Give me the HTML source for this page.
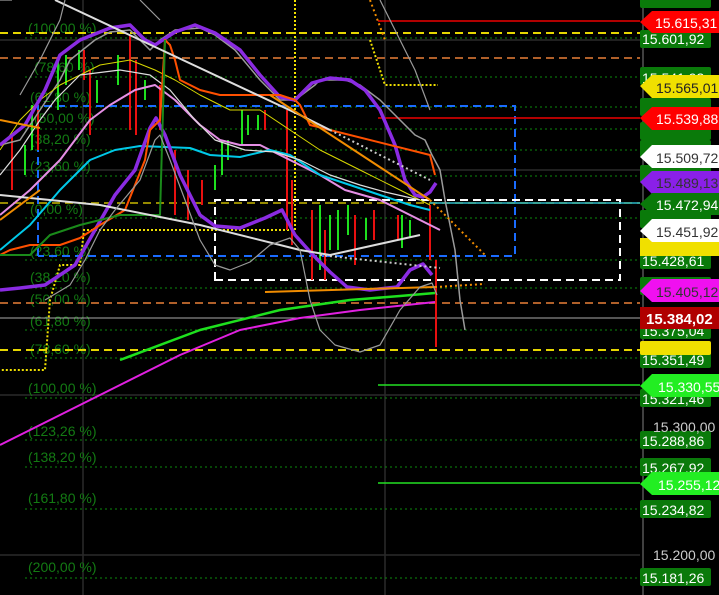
<!DOCTYPE html>
<html><head><meta charset="utf-8"><style>
html,body{margin:0;padding:0;background:#000;width:719px;height:595px;overflow:hidden}
svg{display:block}
.f{font-family:"Liberation Sans",sans-serif;font-size:14px;fill:#137a13}
.t{font-family:"Liberation Sans",sans-serif;font-size:14px}
</style></head><body>
<svg width="719" height="595" viewBox="0 0 719 595" xmlns="http://www.w3.org/2000/svg">
<rect width="719" height="595" fill="#000"/>
<g stroke="#2a2a2a" stroke-width="1.5">
<line x1="83" y1="0" x2="83" y2="595"/><line x1="385" y1="0" x2="385" y2="595"/>
<line x1="0" y1="40" x2="640" y2="40"/><line x1="0" y1="170" x2="640" y2="170"/>
<line x1="0" y1="395" x2="640" y2="395"/><line x1="0" y1="555" x2="640" y2="555"/>
</g>
<line x1="643" y1="0" x2="643" y2="595" stroke="#555" stroke-width="1.5"/>
<g stroke="#0c8a0c" stroke-width="1" stroke-dasharray="2,3">
<line x1="25" y1="38" x2="640" y2="38"/><line x1="25" y1="77" x2="640" y2="77"/>
<line x1="25" y1="107" x2="640" y2="107"/><line x1="25" y1="129" x2="640" y2="129"/>
<line x1="25" y1="150" x2="640" y2="150"/><line x1="25" y1="176" x2="640" y2="176"/>
<line x1="25" y1="218" x2="640" y2="218"/><line x1="25" y1="260" x2="640" y2="260"/>
<line x1="25" y1="288" x2="640" y2="288"/><line x1="25" y1="330" x2="640" y2="330"/>
<line x1="25" y1="358" x2="640" y2="358"/><line x1="25" y1="398" x2="640" y2="398"/>
<line x1="25" y1="440" x2="640" y2="440"/><line x1="25" y1="467" x2="640" y2="467"/>
<line x1="25" y1="509" x2="640" y2="509"/><line x1="25" y1="578" x2="640" y2="578"/>
</g>
<g class="f">
<text x="28" y="33">(100,00 %)</text><text x="34" y="72">(78,60 %)</text>
<text x="30" y="102">(61,80 %)</text><text x="34" y="123">(50,00 %)</text>
<text x="30" y="144">(38,20 %)</text><text x="30" y="171">(23,60 %)</text>
<text x="30" y="214">(0,00 %)</text><text x="30" y="256">(23,60 %)</text>
<text x="30" y="282">(38,20 %)</text><text x="30" y="304">(50,00 %)</text>
<text x="30" y="326">(61,80 %)</text><text x="30" y="354">(78,60 %)</text>
<text x="28" y="393">(100,00 %)</text><text x="28" y="436">(123,26 %)</text>
<text x="28" y="462">(138,20 %)</text><text x="28" y="503">(161,80 %)</text>
<text x="28" y="572">(200,00 %)</text>
</g>
<g stroke-width="2" stroke-dasharray="8,5" fill="none">
<line x1="0" y1="33" x2="640" y2="33" stroke="#e6d600"/>
<line x1="0" y1="58" x2="640" y2="58" stroke="#b0602a"/>
<line x1="0" y1="203" x2="640" y2="203" stroke="#c8b800" stroke-width="1.5"/>
<line x1="0" y1="303" x2="640" y2="303" stroke="#b0602a"/>
<line x1="0" y1="350" x2="640" y2="350" stroke="#e6d600"/>
<path d="M38 256 V106 H515 V256 H38" stroke="#1a6cff"/>
<path d="M215 280 V200 H620 V280 Z" stroke="#fff"/>
</g>
<g stroke-width="1.5">
<line x1="378" y1="21" x2="640" y2="21" stroke="#e00"/>
<line x1="378" y1="118" x2="640" y2="118" stroke="#e00"/>
<line x1="378" y1="385" x2="640" y2="385" stroke="#22e022"/>
<line x1="378" y1="483" x2="640" y2="483" stroke="#22e022"/>
<line x1="0" y1="318" x2="640" y2="318" stroke="#aaa" stroke-width="1"/>
<line x1="430" y1="203" x2="640" y2="203" stroke="#2ab8c8"/>
</g>
<g stroke="#f0e000" stroke-width="2" stroke-dasharray="2,2" fill="none">
<path d="M295 0 V230 H84 L80 265 H60 L50 300 L45 370 H0"/>
<path d="M370 40 L385 85 H438"/>
</g>
<g stroke-width="2">
<g stroke="#1ee01e">
<line x1="25" y1="145" x2="25" y2="175"/><line x1="32" y1="105" x2="32" y2="150"/><line x1="58" y1="60" x2="58" y2="110"/><line x1="66" y1="55" x2="66" y2="85"/><line x1="79" y1="50" x2="79" y2="70"/><line x1="97" y1="80" x2="97" y2="103"/><line x1="118" y1="55" x2="118" y2="85"/><line x1="145" y1="80" x2="145" y2="100"/><line x1="215" y1="165" x2="215" y2="190"/><line x1="222" y1="140" x2="222" y2="175"/><line x1="228" y1="140" x2="228" y2="160"/><line x1="242" y1="110" x2="242" y2="145"/><line x1="248" y1="115" x2="248" y2="135"/><line x1="258" y1="115" x2="258" y2="130"/><line x1="320" y1="205" x2="320" y2="270"/><line x1="330" y1="215" x2="330" y2="250"/><line x1="338" y1="210" x2="338" y2="250"/><line x1="348" y1="205" x2="348" y2="235"/><line x1="366" y1="218" x2="366" y2="240"/><line x1="402" y1="215" x2="402" y2="248"/><line x1="410" y1="220" x2="410" y2="238"/>
</g>
<g stroke="#e81010">
<line x1="12" y1="135" x2="12" y2="190"/><line x1="38" y1="110" x2="38" y2="150"/><line x1="84" y1="50" x2="84" y2="80"/><line x1="90" y1="70" x2="90" y2="135"/><line x1="130" y1="35" x2="130" y2="130"/><line x1="136" y1="60" x2="136" y2="135"/><line x1="160" y1="85" x2="160" y2="130"/><line x1="175" y1="150" x2="175" y2="215"/><line x1="188" y1="170" x2="188" y2="220"/><line x1="202" y1="180" x2="202" y2="205"/><line x1="265" y1="110" x2="265" y2="130"/><line x1="287" y1="110" x2="287" y2="230"/><line x1="292" y1="180" x2="292" y2="245"/><line x1="312" y1="210" x2="312" y2="280"/><line x1="325" y1="230" x2="325" y2="280"/><line x1="355" y1="215" x2="355" y2="265"/><line x1="374" y1="210" x2="374" y2="240"/><line x1="398" y1="215" x2="398" y2="240"/><line x1="430" y1="205" x2="430" y2="260"/><line x1="436" y1="260" x2="436" y2="347"/>
</g>
</g>
<g fill="none" stroke-linejoin="round">
<path d="M0 145 L20 140 L40 110 L60 80 L70 60 L95 40 L110 32 L130 30 L150 50 L160 40 L175 30 L200 28 L215 35 L235 50 L260 80 L280 100 L295 100 L315 85 L320 80 L345 80 L360 85 L380 100 L400 120 L415 135 L425 140 L432 155 L440 170 L445 200 L455 250 L460 300 L465 330" stroke="#9a9a9a" stroke-width="1.5"/>
<path d="M0 150 L20 120 L40 100 L60 85 L80 75 L100 65 L130 60 L155 70 L175 80 L200 95 L230 110 L260 110 L290 130 L320 150 L360 170 L400 190 L430 205" stroke="#d8d800" stroke-width="1"/>
<path d="M0 215 L30 190 L60 160 L90 120 L110 105 L135 90 L155 85 L175 100 L200 125 L220 140 L240 145 L260 145 L290 160 L320 175 L345 190 L380 200 L410 215 L440 230" stroke="#e58fe5" stroke-width="2"/>
<path d="M0 250 L30 225 L60 190 L90 160 L115 150 L140 146 L165 147 L190 148 L210 155 L240 157 L270 150 L290 155 L320 175 L350 185 L380 195 L410 205 L430 210" stroke="#00c8e8" stroke-width="2"/>
<path d="M0 290 L20 288 L45 285 L75 265 L95 230 L115 195 L135 170 L150 128 L156 118 L165 135 L180 175 L200 215 L215 226 L240 228 L265 218 L282 210 L295 235 L313 255 L330 272 L347 287 L370 290 L397 287 L410 270 L423 264 L432 275" stroke="#8a2be2" stroke-width="3.5"/>
<path d="M0 145 L25 125 L45 90 L60 55 L80 40 L110 28 L130 25 L145 40 L155 45 L175 32 L195 25 L215 33 L240 50 L260 75 L280 97 L295 100 L312 83 L330 78 L350 80 L365 90 L380 110 L395 145 L405 180 L415 195 L423 197 L430 192 L436 183" stroke="#8a2be2" stroke-width="3.5"/>
<path d="M0 175 L20 150 L40 120 L55 100 L80 75 L120 70 L150 75 L170 90 L195 120 L215 140 L245 150 L275 152 L300 160 L330 175 L360 185 L385 192 L420 200" stroke="#ddd" stroke-width="1.2"/>
<path d="M0 255 L10 250 L30 245 L60 245 L80 238 L100 225 L125 210 L145 160 L150 130 L160 120 L165 40 L170 45 L175 60 L180 80 L200 90 L220 95 L250 95 L280 95 L295 100 L300 105 L310 125 L330 130 L430 155 L435 175" stroke="#ff5000" stroke-width="2" />
<path d="M0 255 L30 255 L50 235 L80 225 L120 215 L160 215 L165 40" stroke="#1a8a1a" stroke-width="2"/>
<path d="M55 0 L300 115 L330 130" stroke="#ddd" stroke-width="2"/>
<path d="M330 130 L430 180" stroke="#ccc" stroke-width="2" stroke-dasharray="2,3"/>
<path d="M0 195 L100 205 L200 225 L300 250 L330 255" stroke="#ddd" stroke-width="2"/>
<path d="M320 255 L440 268" stroke="#ccc" stroke-width="2" stroke-dasharray="2,3"/>
<path d="M330 255 L420 235" stroke="#ddd" stroke-width="2"/>
<path d="M0 120 L25 125 L40 128" stroke="#f08c00" stroke-width="2"/>
<path d="M0 220 L40 190" stroke="#f08c00" stroke-width="2"/>
<path d="M270 95 L430 200" stroke="#f08c00" stroke-width="2"/>
<path d="M430 200 L485 255" stroke="#f08c00" stroke-width="2" stroke-dasharray="2,3"/>
<path d="M265 292 L435 287" stroke="#f08c00" stroke-width="2"/>
<path d="M435 287 L485 284" stroke="#f08c00" stroke-width="2" stroke-dasharray="2,3"/>
<path d="M370 0 L385 40" stroke="#f08c00" stroke-width="2" stroke-dasharray="2,3"/>
<path d="M120 360 L200 330 L280 310 L350 300 L400 296 L435 293" stroke="#1ee01e" stroke-width="2.5"/>
<path d="M0 445 L60 415 L120 385 L180 355 L240 330 L300 318 L360 310 L435 302" stroke="#e020e0" stroke-width="2"/>
<path d="M0 0 L12 0 M20 95 L40 60 L60 20 L65 0 M140 0 L160 20" stroke="#9a9a9a" stroke-width="1.2"/>
<path d="M45 300 L70 285 L85 260 L100 230 L115 210 L140 180 L155 140 L160 135 L170 160 L185 200 L200 240 L215 265 L230 270 L250 262 L270 245 L290 238 L300 250 L310 300 L320 330 L335 345 L360 352 L380 345 L400 310 L420 287 L432 283 L437 295" stroke="#9a9a9a" stroke-width="1.2"/>
<path d="M380 0 L400 40 L415 70 L430 110" stroke="#9a9a9a" stroke-width="1.2"/>
</g>
<g class="t">
<g fill="#0a7a0a">
<rect x="640" y="-10" width="71" height="18" rx="2"/>
<rect x="640" y="30" width="71" height="18" rx="2"/>
<rect x="640" y="67" width="71" height="18" rx="2"/>
<rect x="640" y="98" width="71" height="18" rx="2"/>
<rect x="640" y="122" width="71" height="18" rx="2"/>
<rect x="640" y="140" width="71" height="18" rx="2"/>
<rect x="640" y="165" width="71" height="18" rx="2"/>
<rect x="640" y="210" width="71" height="18" rx="2"/>
<rect x="640" y="251" width="71" height="18" rx="2"/>
<rect x="640" y="277" width="71" height="18" rx="2"/>
<rect x="640" y="321" width="71" height="18" rx="2"/>
<rect x="640" y="350" width="71" height="18" rx="2"/>
<rect x="640" y="389" width="71" height="18" rx="2"/>
<rect x="640" y="431" width="71" height="18" rx="2"/>
<rect x="640" y="458" width="71" height="18" rx="2"/>
<rect x="640" y="500" width="71" height="18" rx="2"/>
<rect x="640" y="568" width="71" height="18" rx="2"/>
</g>
<rect x="640" y="341" width="71" height="14" rx="2" fill="#f0e000"/>
<rect x="640" y="238" width="79" height="18" fill="#f0e000"/>
<g fill="#fff">
<text x="642" y="44">15.601,92</text><text x="642" y="83">15.541,93</text><text x="642" y="266">15.428,61</text>
<text x="642" y="336">15.375,04</text><text x="642" y="365">15.351,49</text><text x="642" y="404">15.321,46</text>
<text x="642" y="446">15.288,86</text><text x="642" y="473">15.267,92</text><text x="642" y="515">15.234,82</text>
<text x="642" y="583">15.181,26</text>
</g>
<text x="653" y="432" fill="#ccc">15.300,00</text>
<text x="653" y="560" fill="#ccc">15.200,00</text>
<path d="M640 22 L652 11 H719 V33 H652 Z" fill="#f00"/><text x="655" y="28" fill="#fff">15.615,31</text>
<path d="M640 86 L652 75 H719 V98 H652 Z" fill="#f0e000"/><text x="656" y="93" fill="#222">15.565,01</text>
<path d="M640 118 L652 107 H719 V130 H652 Z" fill="#f00"/><text x="656" y="124" fill="#fff">15.539,88</text>
<path d="M640 157 L652 145 H719 V168 H652 Z" fill="#fff"/><text x="656" y="163" fill="#333">15.509,72</text>
<path d="M640 182 L652 171 H719 V194 H652 Z" fill="#8a20e8"/><text x="656" y="188" fill="#333">15.489,13</text>
<path d="M640 204 L652 193 H719 V215 H652 Z" fill="#0a7a0a"/><text x="656" y="210" fill="#fff">15.472,94</text>
<path d="M640 231 L652 219 H719 V242 H652 Z" fill="#fff"/><text x="656" y="237" fill="#333">15.451,92</text>
<path d="M640 291 L652 279 H719 V302 H652 Z" fill="#f010f0"/><text x="656" y="297" fill="#333">15.405,12</text>
<rect x="640" y="307" width="79" height="22" fill="#b00000"/><text x="646" y="324" fill="#fff" font-weight="bold" font-size="15">15.384,02</text>
<path d="M640 386 L652 374 H719 V397 H652 Z" fill="#22ee22"/><text x="658" y="392" fill="#fff">15.330,55</text>
<path d="M640 484 L652 472 H719 V495 H652 Z" fill="#22ee22"/><text x="658" y="490" fill="#fff">15.255,12</text>
</g>
</svg>
</body></html>
